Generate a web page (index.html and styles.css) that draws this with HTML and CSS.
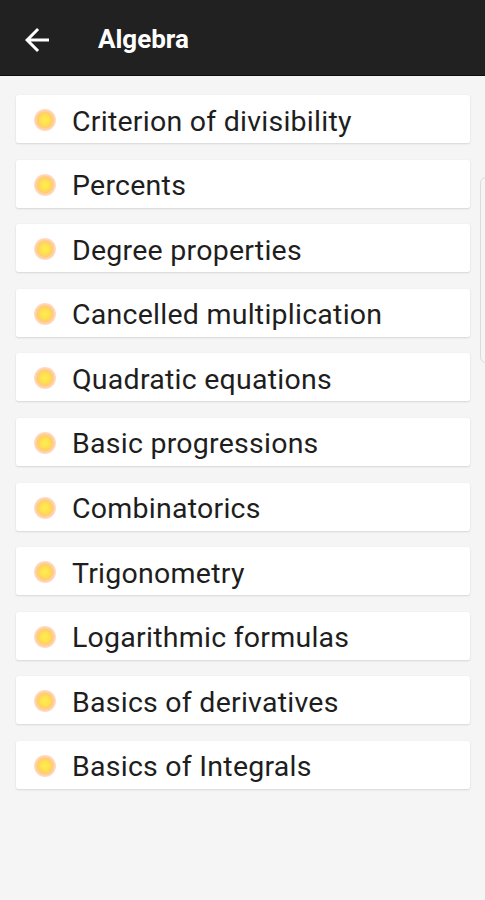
FILE: index.html
```html
<!DOCTYPE html>
<html>

<head>
  <title>Algebra</title>
  <meta name="viewport" content="width=device-width, initial-scale=1.0">
  <link rel="stylesheet" href="styles.css">
</head>

<body>
  <div class="toolbar">
    <svg class="back" width="36" height="36" viewBox="0 0 24 24">
      <path d="M20 11H7.83l5.59-5.59L12 4l-8 8 8 8 1.41-1.41L7.83 13H20v-2z" fill="#fff"/>
    </svg>
    <span class="title">Algebra</span>
  </div>

  <div class="list">
    <div class="item"><span class="dot"></span>Criterion of divisibility</div>
    <div class="item"><span class="dot"></span>Percents</div>
    <div class="item"><span class="dot"></span>Degree properties</div>
    <div class="item"><span class="dot"></span>Cancelled multiplication</div>
    <div class="item"><span class="dot"></span>Quadratic equations</div>
    <div class="item"><span class="dot"></span>Basic progressions</div>
    <div class="item"><span class="dot"></span>Combinatorics</div>
    <div class="item"><span class="dot"></span>Trigonometry</div>
    <div class="item"><span class="dot"></span>Logarithmic formulas</div>
    <div class="item"><span class="dot"></span>Basics of derivatives</div>
    <div class="item"><span class="dot"></span>Basics of Integrals</div>
  </div>

  <div class="edge-handle"></div>
</body>

</html>
```

FILE: styles.css
```css
body {
  font-family: Roboto, "Noto Sans", sans-serif;
  margin: 0;
  padding: 0;
  background-color: #f5f5f5;
  height: 900px;
  overflow: hidden;
}

.toolbar {
  height: 75px;
  background-color: #212121;
  border-bottom: 1px solid #0e0e0e;
  display: flex;
  align-items: center;
  padding-left: 19px;
}

.back {
  width: 36px;
  height: 36px;
  margin-right: 43px;
  margin-top: 4px;
}

.title {
  color: #fff;
  font-size: 26px;
  font-weight: bold;
  margin-top: 3px;
}

.list {
  padding: 19px 15px 0 16px;
  display: flex;
  flex-direction: column;
  gap: 16.6px;
}

.item {
  height: 48px;
  box-sizing: border-box;
  padding-top: 4px;
  background-color: #fff;
  border-radius: 2px;
  box-shadow: 0 1px 2px rgba(0, 0, 0, 0.12), 0 0 1px rgba(0, 0, 0, 0.08);
  display: flex;
  align-items: center;
  font-size: 28.5px;
  letter-spacing: 0.25px;
  color: #1e1e1e;
  padding-left: 18px;
}

.dot {
  width: 22px;
  height: 22px;
  border-radius: 50%;
  margin-right: 16px;
  margin-top: -2px;
  background: radial-gradient(circle, #ffec52 0%, #ffe24c 28%, #ffcc70 48%, rgba(255, 178, 150, 0.5) 68%, rgba(255, 210, 200, 0) 100%);
}

.edge-handle {
  position: absolute;
  left: 480px;
  top: 177px;
  width: 12px;
  height: 184px;
  border: 1px solid #dcdcdc;
  border-radius: 6px;
}
```
